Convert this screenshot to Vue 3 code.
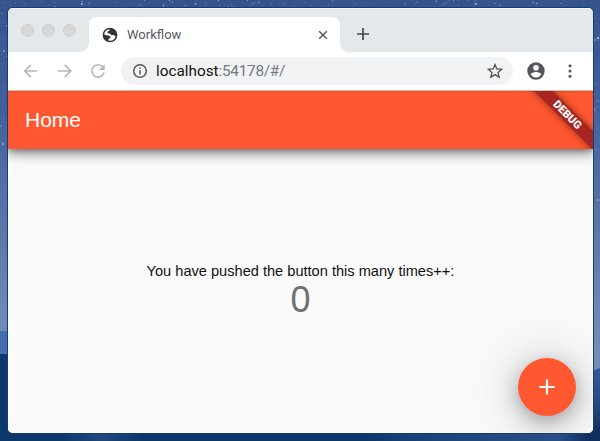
<script setup>
const rand = (n) => {
  const v = Math.sin(n * 127.1) * 43758.5453
  return v - Math.floor(v)
}

const star = (n, x, y) => ({ x, y, r: 0.3 + rand(n + 0.3) * 0.4, o: 0.2 + rand(n + 0.6) * 0.45 })
const stars = [
  ...Array.from({ length: 120 }, (_, i) => star(i, rand(i + 1) * 600, rand(i + 500) * 7)),
  ...Array.from({ length: 20 }, (_, i) => star(i + 200, rand(i + 700) * 7, rand(i + 900) * 170)),
  ...Array.from({ length: 14 }, (_, i) => star(i + 400, 594 + rand(i + 300) * 6, rand(i + 1100) * 150)),
  { x: 82, y: 4, r: 0.9, o: 0.8 },
  { x: 476, y: 4, r: 0.9, o: 0.8 },
  { x: 598, y: 38, r: 1, o: 0.9 },
  { x: 594.5, y: 40, r: 0.8, o: 0.7 },
  { x: 4, y: 51, r: 0.8, o: 0.8 },
  { x: 3, y: 144, r: 0.8, o: 0.8 },
  { x: 598, y: 200, r: 0.7, o: 0.8 },
  { x: 594.5, y: 307, r: 0.6, o: 0.6 },
]
</script>

<template>
  <div class="desktop">
    <svg class="wallpaper" viewBox="0 0 600 441" aria-hidden="true">
      <defs>
        <linearGradient id="sky" x1="0" y1="0" x2="0" y2="1">
          <stop offset="0" stop-color="#35548d" />
          <stop offset="0.25" stop-color="#42619a" />
          <stop offset="0.75" stop-color="#708bba" />
          <stop offset="1" stop-color="#7590bd" />
        </linearGradient>
        <linearGradient id="rock" x1="0" y1="0" x2="1" y2="0">
          <stop offset="0" stop-color="#0d386c" />
          <stop offset="0.1" stop-color="#0d386c" />
          <stop offset="0.17" stop-color="#22477e" />
          <stop offset="0.24" stop-color="#0c356b" />
          <stop offset="0.6" stop-color="#0c356b" />
          <stop offset="0.7" stop-color="#1c427c" />
          <stop offset="0.93" stop-color="#2a4f88" />
          <stop offset="0.98" stop-color="#112f5e" />
        </linearGradient>
        <linearGradient id="slope" x1="0" y1="0" x2="0" y2="1">
          <stop offset="0" stop-color="#365b93" />
          <stop offset="0.6" stop-color="#24477e" />
          <stop offset="1" stop-color="#0f2d5c" />
        </linearGradient>
      </defs>
      <rect width="600" height="441" fill="url(#sky)" />
      <rect y="331" width="300" height="30" fill="#486bb0" />
      <path d="M0 354L300 360L590 372L600 369V441H0Z" fill="url(#rock)" />
      <path d="M592 371L600 368V432H592Z" fill="url(#slope)" />
      <circle v-for="(s, i) in stars" :key="i" :cx="s.x" :cy="s.y" :r="s.r" :opacity="s.o" fill="#d6e5fa" />
    </svg>

    <main class="window">
      <header class="tabs">
        <div class="lights"><i></i><i></i><i></i></div>
        <div class="tab">
          <svg class="globe" viewBox="0 0 16 16">
            <circle cx="8" cy="8" r="6.6" fill="#fff" stroke="#303438" stroke-width="1.5" />
            <path d="M1.5 7.2L4.3 8.2L7 8.5L8.7 10.1L8.2 11.3L6.6 11.7L6.4 14.5Q2 13 1.5 7.2ZM8.3 1.3L7.3 3.8L5.6 4.5L5.5 6.2L8.2 6.7L9.5 8.2L12 8.1L13.1 9.5L14.5 9.2Q15 3 8.3 1.3Z" fill="#303438" />
          </svg>
          <span class="tab-title">Workflow</span>
          <svg class="close" viewBox="0 0 10 10"><path d="M1.2 1.2L8.8 8.8M8.8 1.2L1.2 8.8" /></svg>
        </div>
        <svg class="new-tab" viewBox="0 0 14 14"><path d="M7 1V13M1 7H13" /></svg>
      </header>

      <nav class="toolbar">
        <svg class="nav-icon" viewBox="0 0 16 16"><path d="M14.2 8H2M7.8 1.9L1.7 8L7.8 14.1" /></svg>
        <svg class="nav-icon" viewBox="0 0 16 16"><path d="M1 8H13.5M7.7 1.9L13.8 8L7.7 14.1" /></svg>
        <svg class="nav-icon" viewBox="0 0 16 16">
          <path d="M12.9 4.1A6.2 6.2 0 1 0 14 9.5" />
          <path d="M14.7 1.2V6.9H9Z" class="solid" />
        </svg>
        <div class="address">
          <svg class="info" viewBox="0 0 16 16">
            <circle cx="8" cy="8" r="6.3" />
            <path d="M8 7.2V11.5M8 4.5V6" />
          </svg>
          <span class="url">localhost<span>:54178/#/</span></span>
          <svg class="star" viewBox="0 0 16 16">
            <path d="M8 1.6L9.8 6L14.6 6.4L11 9.5L12.1 14.1L8 11.6L3.9 14.1L5 9.5L1.4 6.4L6.2 6Z" />
          </svg>
        </div>
        <svg class="profile" viewBox="0 0 20 20">
          <path fill-rule="evenodd" d="M10 1.3a8.7 8.7 0 1 0 0 17.4a8.7 8.7 0 1 0 0-17.4ZM10 4a2.8 2.8 0 1 1 0 5.6a2.8 2.8 0 1 1 0-5.6ZM10 16.4Q6.5 16.4 4.7 13.6C4.8 11.8 8.3 10.9 10 10.9S15.2 11.8 15.3 13.6Q13.5 16.4 10 16.4Z" />
        </svg>
        <svg class="menu" viewBox="0 0 4 16">
          <circle cx="2" cy="2.8" r="1.5" /><circle cx="2" cy="8" r="1.5" /><circle cx="2" cy="13.2" r="1.5" />
        </svg>
      </nav>

      <section class="app">
        <header class="app-bar">
          <h1>Home</h1>
          <div class="banner"><div class="ribbon">DEBUG</div></div>
        </header>
        <div class="content">
          <p class="label">You have pushed the button this many times++:</p>
          <p class="count">0</p>
        </div>
        <button class="fab" aria-label="Increment">
          <svg viewBox="0 0 16 16"><path d="M8 0.4V15.6M0.4 8H15.6" /></svg>
        </button>
      </section>
    </main>
  </div>
</template>

<style>
body {
  margin: 0;
  overflow: hidden;
}
</style>

<style scoped>
.desktop {
  position: relative;
  box-sizing: border-box;
  width: 600px;
  height: 441px;
  padding: 8px 7px 8px 8px;
  overflow: hidden;
}
.wallpaper {
  position: absolute;
  inset: 0;
  width: 600px;
  height: 441px;
}
.window {
  position: relative;
  display: flex;
  flex-direction: column;
  width: 585px;
  height: 425px;
  overflow: hidden;
  border-radius: 5px;
  background: #fff;
  box-shadow: 0 0 0 1px #143c77;
}
svg {
  display: block;
  flex: none;
  fill: none;
}
.tabs {
  display: flex;
  align-items: flex-start;
  height: 44px;
  background: #e5e8ea;
  box-shadow: inset 0 1px #f3f5f6;
}
.lights {
  display: flex;
  box-sizing: border-box;
  gap: 8px;
  padding: 16px 0 0 13px;
  width: 81px;
}
.lights i {
  box-sizing: border-box;
  width: 13px;
  height: 13px;
  border: 1px solid #cfcfcf;
  border-radius: 50%;
  background: #d8d8d8;
}
.tab {
  position: relative;
  display: flex;
  align-items: center;
  box-sizing: border-box;
  width: 251px;
  height: 35px;
  margin-top: 9px;
  padding: 0 12px 0 13px;
  border-radius: 8px 8px 0 0;
  background: #fff;
}
.tab::before,
.tab::after {
  content: "";
  position: absolute;
  bottom: 0;
  width: 8px;
  height: 8px;
}
.tab::before {
  left: -8px;
  background: radial-gradient(circle at 0 0, transparent 7.5px, #fff 8px);
}
.tab::after {
  right: -8px;
  background: radial-gradient(circle at 100% 0, transparent 7.5px, #fff 8px);
}
.globe {
  width: 16px;
  height: 16px;
}
.tab-title {
  flex: 1;
  margin-left: 9px;
  font: 13px/18px Roboto, sans-serif;
  color: #55595e;
}
.close {
  width: 10px;
  height: 10px;
  stroke: #4e5256;
  stroke-width: 1.4;
}
.new-tab {
  width: 14px;
  height: 14px;
  margin: 19px 0 0 15.5px;
  stroke: #45494d;
  stroke-width: 1.7;
}
.toolbar {
  display: flex;
  align-items: center;
  box-sizing: border-box;
  height: 38px;
  padding-left: 15px;
}
.nav-icon {
  width: 16px;
  height: 16px;
  margin-right: 17.5px;
  stroke: #b4b6b8;
  stroke-width: 1.6;
}
.nav-icon .solid {
  fill: #b4b6b8;
  stroke: none;
}
.address {
  display: flex;
  align-items: center;
  box-sizing: border-box;
  width: 392px;
  height: 28px;
  margin-left: -3px;
  padding: 0 10px 0 11px;
  border-radius: 14px;
  background: #f1f2f3;
}
.info {
  width: 16px;
  height: 16px;
  stroke: #55595d;
  stroke-width: 1.5;
}
.url {
  flex: 1;
  margin-left: 8.5px;
  font: 15.3px/20px Roboto, sans-serif;
  color: #111;
}
.url span {
  letter-spacing: -0.25px;
  color: #74797e;
}
.star {
  width: 16px;
  height: 16px;
  stroke: #4e5256;
  stroke-width: 1.3;
}
.profile {
  width: 20px;
  height: 20px;
  margin-left: 13.5px;
  fill: #53565a;
}
.menu {
  width: 4px;
  height: 16px;
  margin-left: 21.5px;
  fill: #53565a;
}
.app {
  position: relative;
  flex: 1;
  box-sizing: border-box;
  overflow: hidden;
  border-top: 1px solid #c9bfbc;
  background: #fafafa;
  box-shadow: inset 1px 0 #fff, inset -1px -1px #fff;
  font-family: "Liberation Sans", sans-serif;
}
.app-bar {
  position: relative;
  display: flex;
  align-items: center;
  height: 58px;
  padding-left: 17px;
  background: #ff5830;
  box-shadow: 0 2px 5px rgba(0, 0, 0, 0.28), 0 5px 12px rgba(0, 0, 0, 0.34), 0 2px 14px rgba(0, 0, 0, 0.1), inset 0 1px #f34b19;
}
h1 {
  margin: 0;
  font-size: 21px;
  font-weight: 400;
  line-height: 26px;
  color: #fff;
}
.banner {
  position: absolute;
  top: 0;
  right: 0;
  width: 90px;
  height: 58px;
  overflow: hidden;
}
.ribbon {
  position: absolute;
  left: 5px;
  top: 18px;
  width: 120px;
  height: 13px;
  transform: rotate(45deg);
  background: #a92523;
  box-shadow: 0 0 7px rgba(0, 0, 0, 0.5);
  font: 900 11px/13px Roboto, sans-serif;
  color: #fff;
  text-align: center;
  text-indent: -2px;
}
.content {
  display: flex;
  flex-direction: column;
  align-items: center;
  padding-top: 112px;
}
.content p {
  margin: 0;
  white-space: nowrap;
}
.label {
  font-size: 14.6px;
  line-height: 20px;
  color: #111;
}
.count {
  font-size: 36px;
  line-height: 38px;
  color: #707070;
}
.fab {
  position: absolute;
  right: 17px;
  bottom: 17px;
  display: grid;
  place-items: center;
  width: 58px;
  height: 58px;
  padding: 0;
  border: 0;
  border-radius: 50%;
  background: #ff5830;
  box-shadow: 0 5px 14px rgba(0, 0, 0, 0.16), 0 7px 26px 2px rgba(0, 0, 0, 0.14), 0 5px 50px 14px rgba(0, 0, 0, 0.11);
}
.fab svg {
  width: 16px;
  height: 16px;
  stroke: #fff;
  stroke-width: 2.2;
}
</style>
